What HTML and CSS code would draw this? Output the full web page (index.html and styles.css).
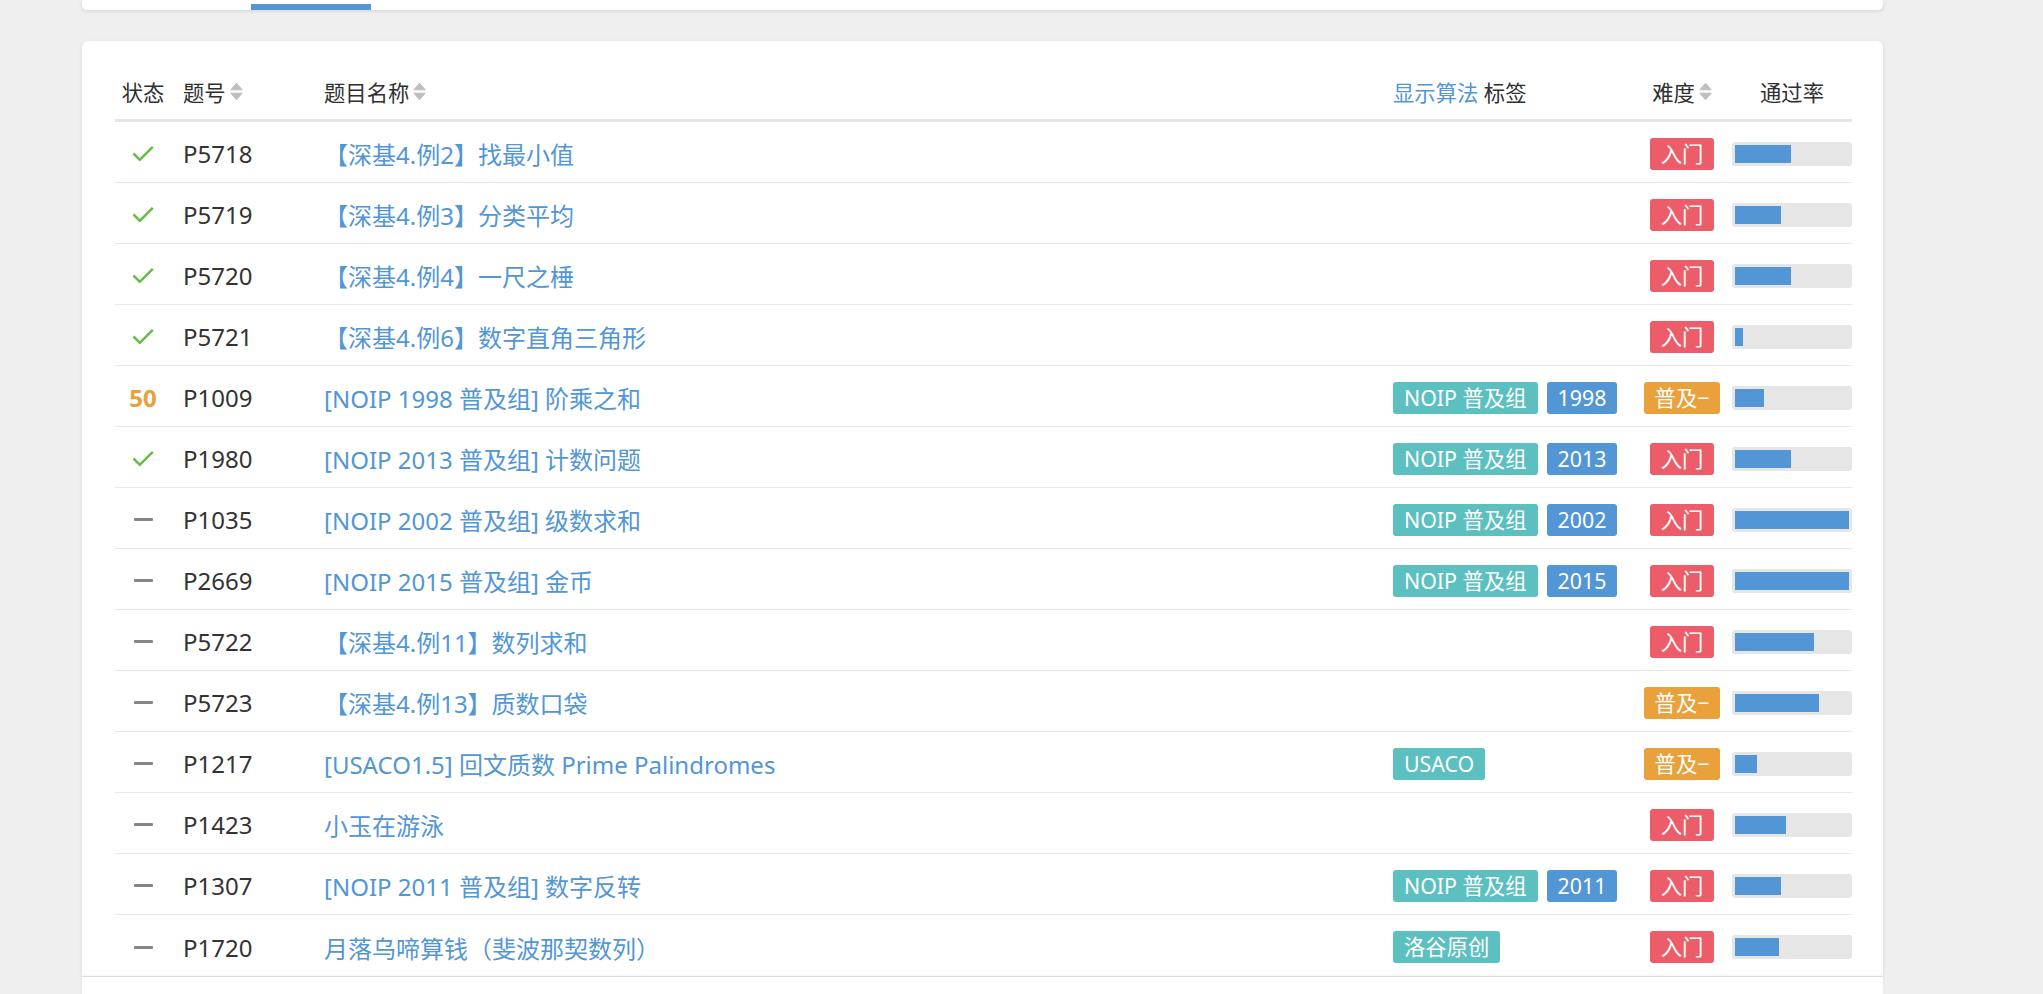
FILE: index.html
```html
<!DOCTYPE html>
<html lang="zh-CN">
<head>
<meta charset="utf-8">
<title>题目列表</title>
<link rel="stylesheet" href="styles.css">
</head>
<body>
<div class="page">
  <div class="tabs-card">
    <div class="tab-indicator"></div>
  </div>

  <div class="list-card">
    <div class="row head">
      <div class="c-status">状态</div>
      <div class="c-pid">题号<svg class="sort" viewBox="0 0 13 19"><path d="M0.8 7.8 L6.5 1.2 L12.2 7.8 Z M0.8 11.2 L12.2 11.2 L6.5 17.8 Z"/></svg></div>
      <div class="c-title">题目名称<svg class="sort" viewBox="0 0 13 19"><path d="M0.8 7.8 L6.5 1.2 L12.2 7.8 Z M0.8 11.2 L12.2 11.2 L6.5 17.8 Z"/></svg></div>
      <div class="c-tags-head"><a class="link">显示算法</a> 标签</div>
      <div class="c-diff">难度<svg class="sort" viewBox="0 0 13 19"><path d="M0.8 7.8 L6.5 1.2 L12.2 7.8 Z M0.8 11.2 L12.2 11.2 L6.5 17.8 Z"/></svg></div>
      <div class="c-rate">通过率</div>
    </div>

    <div class="row">
      <div class="c-status"><svg class="ac" viewBox="0 0 22 17"><path d="M1.5 8.5 L7.8 14.8 L20.8 1.8"/></svg></div>
      <div class="c-pid pid">P5718</div>
      <div class="c-title"><a class="link">【深基4.例2】找最小值</a></div>
      <div class="c-tags"></div>
      <div class="c-diff"><span class="badge red">入门</span></div>
      <div class="c-rate"><div class="bar"><div class="fill" style="width:49%"></div></div></div>
    </div>

    <div class="row">
      <div class="c-status"><svg class="ac" viewBox="0 0 22 17"><path d="M1.5 8.5 L7.8 14.8 L20.8 1.8"/></svg></div>
      <div class="c-pid pid">P5719</div>
      <div class="c-title"><a class="link">【深基4.例3】分类平均</a></div>
      <div class="c-tags"></div>
      <div class="c-diff"><span class="badge red">入门</span></div>
      <div class="c-rate"><div class="bar"><div class="fill" style="width:40%"></div></div></div>
    </div>

    <div class="row">
      <div class="c-status"><svg class="ac" viewBox="0 0 22 17"><path d="M1.5 8.5 L7.8 14.8 L20.8 1.8"/></svg></div>
      <div class="c-pid pid">P5720</div>
      <div class="c-title"><a class="link">【深基4.例4】一尺之棰</a></div>
      <div class="c-tags"></div>
      <div class="c-diff"><span class="badge red">入门</span></div>
      <div class="c-rate"><div class="bar"><div class="fill" style="width:49%"></div></div></div>
    </div>

    <div class="row">
      <div class="c-status"><svg class="ac" viewBox="0 0 22 17"><path d="M1.5 8.5 L7.8 14.8 L20.8 1.8"/></svg></div>
      <div class="c-pid pid">P5721</div>
      <div class="c-title"><a class="link">【深基4.例6】数字直角三角形</a></div>
      <div class="c-tags"></div>
      <div class="c-diff"><span class="badge red">入门</span></div>
      <div class="c-rate"><div class="bar"><div class="fill" style="width:7%"></div></div></div>
    </div>

    <div class="row">
      <div class="c-status"><span class="score">50</span></div>
      <div class="c-pid pid">P1009</div>
      <div class="c-title"><a class="link">[NOIP 1998 普及组] 阶乘之和</a></div>
      <div class="c-tags"><span class="tag teal">NOIP 普及组</span><span class="tag blue">1998</span></div>
      <div class="c-diff"><span class="badge orange">普及−</span></div>
      <div class="c-rate"><div class="bar"><div class="fill" style="width:25%"></div></div></div>
    </div>

    <div class="row">
      <div class="c-status"><svg class="ac" viewBox="0 0 22 17"><path d="M1.5 8.5 L7.8 14.8 L20.8 1.8"/></svg></div>
      <div class="c-pid pid">P1980</div>
      <div class="c-title"><a class="link">[NOIP 2013 普及组] 计数问题</a></div>
      <div class="c-tags"><span class="tag teal">NOIP 普及组</span><span class="tag blue">2013</span></div>
      <div class="c-diff"><span class="badge red">入门</span></div>
      <div class="c-rate"><div class="bar"><div class="fill" style="width:49%"></div></div></div>
    </div>

    <div class="row">
      <div class="c-status"><span class="none"></span></div>
      <div class="c-pid pid">P1035</div>
      <div class="c-title"><a class="link">[NOIP 2002 普及组] 级数求和</a></div>
      <div class="c-tags"><span class="tag teal">NOIP 普及组</span><span class="tag blue">2002</span></div>
      <div class="c-diff"><span class="badge red">入门</span></div>
      <div class="c-rate"><div class="bar"><div class="fill" style="width:100%"></div></div></div>
    </div>

    <div class="row">
      <div class="c-status"><span class="none"></span></div>
      <div class="c-pid pid">P2669</div>
      <div class="c-title"><a class="link">[NOIP 2015 普及组] 金币</a></div>
      <div class="c-tags"><span class="tag teal">NOIP 普及组</span><span class="tag blue">2015</span></div>
      <div class="c-diff"><span class="badge red">入门</span></div>
      <div class="c-rate"><div class="bar"><div class="fill" style="width:100%"></div></div></div>
    </div>

    <div class="row">
      <div class="c-status"><span class="none"></span></div>
      <div class="c-pid pid">P5722</div>
      <div class="c-title"><a class="link">【深基4.例11】数列求和</a></div>
      <div class="c-tags"></div>
      <div class="c-diff"><span class="badge red">入门</span></div>
      <div class="c-rate"><div class="bar"><div class="fill" style="width:69%"></div></div></div>
    </div>

    <div class="row">
      <div class="c-status"><span class="none"></span></div>
      <div class="c-pid pid">P5723</div>
      <div class="c-title"><a class="link">【深基4.例13】质数口袋</a></div>
      <div class="c-tags"></div>
      <div class="c-diff"><span class="badge orange">普及−</span></div>
      <div class="c-rate"><div class="bar"><div class="fill" style="width:74%"></div></div></div>
    </div>

    <div class="row">
      <div class="c-status"><span class="none"></span></div>
      <div class="c-pid pid">P1217</div>
      <div class="c-title"><a class="link">[USACO1.5] 回文质数 Prime Palindromes</a></div>
      <div class="c-tags"><span class="tag teal">USACO</span></div>
      <div class="c-diff"><span class="badge orange">普及−</span></div>
      <div class="c-rate"><div class="bar"><div class="fill" style="width:19%"></div></div></div>
    </div>

    <div class="row">
      <div class="c-status"><span class="none"></span></div>
      <div class="c-pid pid">P1423</div>
      <div class="c-title"><a class="link">小玉在游泳</a></div>
      <div class="c-tags"></div>
      <div class="c-diff"><span class="badge red">入门</span></div>
      <div class="c-rate"><div class="bar"><div class="fill" style="width:45%"></div></div></div>
    </div>

    <div class="row">
      <div class="c-status"><span class="none"></span></div>
      <div class="c-pid pid">P1307</div>
      <div class="c-title"><a class="link">[NOIP 2011 普及组] 数字反转</a></div>
      <div class="c-tags"><span class="tag teal">NOIP 普及组</span><span class="tag blue">2011</span></div>
      <div class="c-diff"><span class="badge red">入门</span></div>
      <div class="c-rate"><div class="bar"><div class="fill" style="width:40%"></div></div></div>
    </div>

    <div class="row">
      <div class="c-status"><span class="none"></span></div>
      <div class="c-pid pid">P1720</div>
      <div class="c-title"><a class="link">月落乌啼算钱（斐波那契数列）</a></div>
      <div class="c-tags"><span class="tag teal">洛谷原创</span></div>
      <div class="c-diff"><span class="badge red">入门</span></div>
      <div class="c-rate"><div class="bar"><div class="fill" style="width:39%"></div></div></div>
    </div>
  </div>

  <div class="bottom-bar"></div>
</div>
</body>
</html>
```

FILE: styles.css
```css
html, body {
  margin: 0;
  padding: 0;
  background: #efefef;
  height: 994px;
  overflow: hidden;
}
body {
  font-family: "Noto Sans", "Open Sans", "Noto Sans CJK SC", sans-serif;
  font-size: 21.33px;
  color: #333;
}
.page {
  width: 1801px;
  margin-left: 82px;
}
.tabs-card {
  height: 10px;
  background: #fff;
  border-radius: 0 0 5px 5px;
  box-shadow: 0 1px 4px rgba(0, 0, 0, 0.12);
  display: flex;
  align-items: flex-end;
}
.tab-indicator {
  width: 120px;
  height: 6px;
  margin-left: 169px;
  background: #5296d5;
}
.list-card {
  margin-top: 31px;
  background: #fff;
  border-radius: 6px 6px 0 0;
  box-shadow: 0 1px 4px rgba(0, 0, 0, 0.08);
  padding: 22px 31px 0 33px;
}
.row {
  display: grid;
  grid-template-columns: 56px 153px 1fr 239px 100px 120px;
  align-items: center;
  height: 61px;
  box-sizing: border-box;
  padding-top: 3px;
  border-bottom: 1px solid #e8e8e8;
}
.row.head {
  height: 59px;
  padding-top: 0;
  border-bottom: 3px solid #e5e5e5;
  color: #2f2f2f;
}
.row:last-child {
  border-bottom: none;
}
.c-status {
  display: flex;
  justify-content: center;
}
.c-pid {
  padding-left: 12px;
  display: flex;
  align-items: center;
}
.c-title {
  display: flex;
  align-items: center;
}
.c-tags {
  display: flex;
  align-items: center;
  gap: 9px;
}
.c-tags-head {
  white-space: nowrap;
}
.c-diff {
  display: flex;
  justify-content: center;
  align-items: center;
}
.c-rate {
  display: flex;
  justify-content: center;
}
.sort {
  width: 13px;
  height: 19px;
  margin-left: 4px;
  fill: #bebebe;
  stroke: #bebebe;
  stroke-width: 1;
  stroke-linejoin: round;
}
.link {
  color: #5296d5;
  text-decoration: none;
  cursor: pointer;
}
.c-title .link {
  font-size: 24px;
}
.pid {
  font-size: 24px;
  color: #333;
}
.ac {
  width: 22px;
  height: 17px;
  fill: none;
  stroke: #64bd45;
  stroke-width: 2.5;
}
.score {
  color: #e8a13b;
  font-weight: 700;
  font-size: 24px;
}
.none {
  display: block;
  width: 19px;
  height: 3px;
  background: #858585;
  border-radius: 1px;
}
.tag, .badge {
  display: inline-block;
  height: 32px;
  line-height: 32px;
  padding: 0 11px;
  border-radius: 3px;
  color: #fff;
  white-space: nowrap;
}
.teal { background: #5cbfc0; }
.blue { background: #5296d5; }
.red { background: #ec5d69; }
.orange { background: #e8a13b; }
.bar {
  width: 120px;
  height: 24px;
  box-sizing: border-box;
  padding: 3px;
  background: #e6e6e6;
  border-radius: 3px;
}
.fill {
  height: 18px;
  background: #5296d5;
}
.bottom-bar {
  height: 30px;
  background: #fff;
  border-top: 1px solid #dedede;
  box-shadow: 0 -1px 3px rgba(0, 0, 0, 0.06);
}
```
